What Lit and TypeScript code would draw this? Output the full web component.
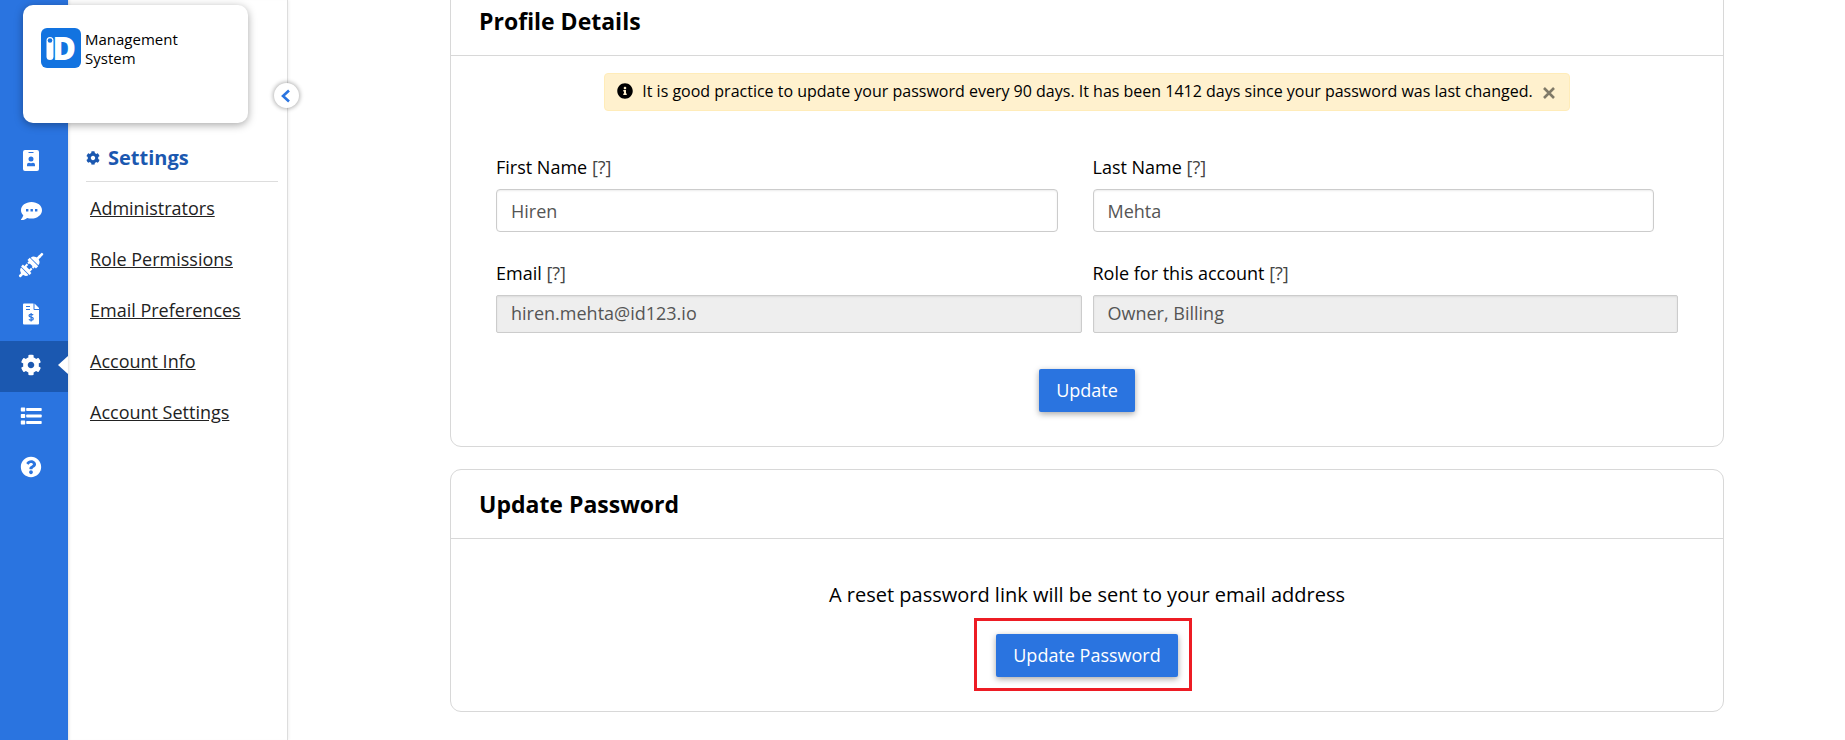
import { LitElement, html, css, svg } from "lit";
import { customElement, state } from "lit/decorators.js";

const COG =
  "M487.4 315.7l-42.6-24.6c4.3-23.2 4.3-47 0-70.2l42.6-24.6c4.9-2.8 7.1-8.6 5.5-14-11.1-35.6-30-67.8-54.7-94.6-3.8-4.1-10-5.1-14.8-2.3L380.8 110c-17.9-15.4-38.5-27.3-60.8-35.1V25.8c0-5.6-3.9-10.5-9.4-11.7-36.7-8.2-74.3-7.8-109.2 0-5.5 1.2-9.4 6.1-9.4 11.7V75c-22.2 7.9-42.8 19.8-60.8 35.1L88.7 85.5c-4.9-2.8-11-1.9-14.8 2.3-24.7 26.7-43.6 58.9-54.7 94.6-1.7 5.4.6 11.2 5.5 14L67.3 221c-4.3 23.2-4.3 47 0 70.2l-42.6 24.6c-4.9 2.8-7.1 8.6-5.5 14 11.1 35.6 30 67.8 54.7 94.6 3.8 4.1 10 5.1 14.8 2.3l42.6-24.6c17.9 15.4 38.5 27.3 60.8 35.1v49.2c0 5.6 3.9 10.5 9.4 11.7 36.7 8.2 74.3 7.8 109.2 0 5.5-1.2 9.4-6.1 9.4-11.7v-49.2c22.2-7.9 42.8-19.8 60.8-35.1l42.6 24.6c4.9 2.8 11 1.9 14.8-2.3 24.7-26.7 43.6-58.9 54.7-94.6 1.5-5.5-.7-11.3-5.6-14.1zM256 336c-44.1 0-80-35.9-80-80s35.9-80 80-80 80 35.9 80 80-35.9 80-80 80z";
const HELP =
  "M504 256c0 136.997-111.043 248-248 248S8 392.997 8 256C8 119.083 119.043 8 256 8s248 111.083 248 248zM262.655 90c-54.497 0-89.255 22.957-116.549 63.758-3.536 5.286-2.353 12.415 2.715 16.258l34.699 26.31c5.205 3.947 12.621 3.008 16.665-2.122 17.864-22.658 30.113-35.797 57.303-35.797 20.429 0 45.698 13.148 45.698 32.958 0 14.976-12.363 22.667-32.534 33.976C247.128 238.528 216 254.941 216 296v4c0 6.627 5.373 12 12 12h56c6.627 0 12-5.373 12-12v-1.333c0-28.462 83.186-29.647 83.186-106.667 0-58.002-60.165-102-116.531-102zM256 338c-25.365 0-46 20.635-46 46 0 25.364 20.635 46 46 46s46-20.636 46-46c0-25.365-20.635-46-46-46z";
const INFO =
  "M256 8C119.043 8 8 119.083 8 256c0 136.997 111.043 248 248 248s248-111.003 248-248C504 119.083 392.957 8 256 8zm0 110c23.196 0 42 18.804 42 42s-18.804 42-42 42-42-18.804-42-42 18.804-42 42-42zm56 254c0 6.627-5.373 12-12 12h-88c-6.627 0-12-5.373-12-12v-24c0-6.627 5.373-12 12-12h12v-64h-12c-6.627 0-12-5.373-12-12v-24c0-6.627 5.373-12 12-12h64c6.627 0 12 5.373 12 12v100h12c6.627 0 12 5.373 12 12v24z";

/* Rail icons, drawn in a 24 x 24 box unless scaled from a 512 grid. */
const ICONS: Record<string, unknown> = {
  badge: svg`<path fill-rule="evenodd" d="M6 1h12a2 2 0 0 1 2 2v17a2 2 0 0 1-2 2H6a2 2 0 0 1-2-2V3a2 2 0 0 1 2-2zM9.500 3v1h5V3zM12 7.500a2.500 2.500 0 1 0 0 5 2.500 2.500 0 0 0 0-5zM10 13.800a2 2 0 0 0-2 2V17.200h8v-1.400a2 2 0 0 0-2-2c-1.300.6-2.700.6-4 0z"/>`,
  chat: svg`<path fill-rule="evenodd" d="M12.500 2C6.700 2 2 5.600 2 10.200c0 2 .9 3.700 2.300 5.100C3.800 17.600 2 19.300 2 19.500c-.2.300 0 .6.300.6 2.600 0 4.700-1.200 5.800-2.200 1.400.4 2.900.6 4.400.6C18.300 18.500 23 14.800 23 10.200S18.300 2 12.500 2zM7 9v2.400h2.400V9zm4.500 0v2.400h2.400V9zM16 9v2.400h2.400V9z"/>`,
  plug: svg`<g transform="translate(0 2) rotate(-45 12 12)">
      <rect x="-4.500" y="10.800" width="5" height="2.600" rx="1"/>
      <path d="M3.200 6.800v10.400C.8 17.200-.8 14.800-.8 12s1.600-5.200 4-5.200z"/>
      <path d="M4 6h2.600v2h3.400v2H7.600v4H10v2H6.600v2H4z"/>
      <path d="M13 6h3.200v12H13v-1.800h-2V14h1.200v-4H11V7.800h2z"/>
      <path d="M17 6.600c2.800 0 4.500 2.400 4.500 5.400s-1.700 5.400-4.500 5.400z"/>
      <rect x="23.300" y="10.800" width="5.200" height="2.600" rx="1"/>
      <rect x="21" y="10.800" width="4" height="2.600"/>
    </g>`,
  invoice: svg`<path fill-rule="evenodd" d="M5 1.500h9.500v5.500a1 1 0 0 0 1 1H20v13.500a1 1 0 0 1-1 1H5a1 1 0 0 1-1-1v-19a1 1 0 0 1 1-1zM7 4v1h4V4zm0 3v1h4V7z"/>
    <path d="M15.500 1.500 20 6v1h-4.500z"/>
    <path d="M14.200 13c-1-1-4.200-1-4.200.7 0 2 4.300 1 4.300 3 0 1.800-3.300 1.800-4.400.6M12.100 11v8.500" fill="none" stroke="#2a74e0" stroke-width="1.200"/>`,
  cog: svg`<path transform="translate(1.500 1.500) scale(.041)" d=${COG}/>`,
  list: svg`<path d="M2.500 3.500h3a.7.7 0 0 1 .7.700v2.600a.7.7 0 0 1-.7.700h-3a.7.7 0 0 1-.7-.7V4.200a.7.7 0 0 1 .7-.7zM2.500 10h3a.7.7 0 0 1 .7.700v2.600a.7.7 0 0 1-.7.700h-3a.7.7 0 0 1-.7-.7v-2.600a.7.7 0 0 1 .7-.7zM2.500 16.500h3a.7.7 0 0 1 .7.700v2.600a.7.7 0 0 1-.7.700h-3a.7.7 0 0 1-.7-.7v-2.600a.7.7 0 0 1 .7-.7z"/>
    <rect x="7.200" y="4" width="15.500" height="3" rx=".7"/><rect x="7.200" y="10.500" width="15.500" height="3" rx=".7"/><rect x="7.200" y="17" width="15.500" height="3" rx=".7"/>`,
  help: svg`<path transform="translate(1.500 1.500) scale(.041)" d=${HELP}/>`,
};

const RAIL = [
  { icon: "badge", label: "ID cards" },
  { icon: "chat", label: "Messages" },
  { icon: "plug", label: "Integrations" },
  { icon: "invoice", label: "Billing" },
  { icon: "cog", label: "Settings" },
  { icon: "list", label: "Logs" },
  { icon: "help", label: "Help" },
];

const LINKS = ["Administrators", "Role Permissions", "Email Preferences", "Account Info", "Account Settings"];

const FIELDS = [
  { id: "first", label: "First Name", value: "Hiren", locked: false },
  { id: "last", label: "Last Name", value: "Mehta", locked: false },
  { id: "email", label: "Email", value: "hiren.mehta@id123.io", locked: true },
  { id: "role", label: "Role for this account", value: "Owner, Billing", locked: true },
];

@customElement("app-root")
export class AppRoot extends LitElement {
  @state() private notice = true;

  static styles = css`
    :host {
      display: flex;
      position: relative;
      height: 100vh;
      overflow: hidden;
      background: #fff;
      color: #000;
      font-family: "Open Sans", "Noto Sans", sans-serif;
      font-size: 18px;
      line-height: 24px;
    }
    * {
      box-sizing: border-box;
    }
    h1,
    h2,
    p {
      margin: 0;
    }
    button,
    input {
      font: inherit;
    }
    .rail {
      flex: none;
      width: 68px;
      padding-top: 137px;
      background: #2a74e0;
    }
    .rail-item {
      display: flex;
      align-items: center;
      position: relative;
      height: 51px;
      padding: 0 0 3px 19px;
      color: #fff;
    }
    .rail-item svg {
      width: 24px;
      height: 24px;
      fill: currentColor;
      overflow: visible;
    }
    .rail-item.active {
      background: #1b58b0;
    }
    .rail-item.active::after {
      content: "";
      position: absolute;
      right: 0;
      top: 15px;
      border: solid transparent;
      border-width: 9px 10px 9px 0;
      border-right-color: #fff;
    }
    .side {
      flex: none;
      position: relative;
      width: 220px;
      padding: 143px 9px 0 18px;
      border-right: 1px solid #ddd;
      box-shadow: inset 3px 0 3px -2px rgba(0, 0, 0, 0.12), 1px 0 3px rgba(0, 0, 0, 0.06);
    }
    .side-title {
      display: flex;
      align-items: center;
      gap: 8px;
      height: 39px;
      padding-bottom: 9px;
      border-bottom: 1px solid #ddd;
      color: #1b58b0;
      font-size: 20px;
      font-weight: 700;
    }
    .side-title svg {
      width: 14px;
      height: 14px;
      fill: currentColor;
    }
    .links {
      display: flex;
      flex-direction: column;
      align-items: flex-start;
      gap: 27px;
      padding: 14px 0 0 4px;
    }
    .links a {
      color: #222;
      text-decoration: underline;
    }
    .collapse {
      display: grid;
      place-items: center;
      position: absolute;
      right: -12px;
      top: 83px;
      width: 25px;
      height: 25px;
      padding: 0;
      border: 0;
      border-radius: 50%;
      background: #fff;
      box-shadow: 0 0 4px 1px rgba(0, 0, 0, 0.3);
    }
    .brand {
      display: flex;
      align-items: flex-start;
      gap: 4px;
      position: absolute;
      left: 23px;
      top: 5px;
      width: 225px;
      height: 118px;
      padding: 23px 18px;
      border-radius: 10px;
      background: #fff;
      box-shadow: 0 2px 8px rgba(0, 0, 0, 0.35);
      font-size: 15px;
      line-height: 19px;
    }
    .brand svg {
      flex: none;
      width: 40px;
      height: 40px;
      overflow: visible;
    }
    .brand span {
      padding-top: 2px;
    }
    .brand text {
      font: 800 32px "Open Sans", sans-serif;
    }
    .main {
      display: flex;
      flex: 1;
      flex-direction: column;
      gap: 22px;
      min-width: 0;
      margin-top: -14px;
      padding: 0 121px 0 162px;
    }
    .card {
      flex: none;
      border: 1px solid #d8d8d8;
      border-radius: 11px;
    }
    .card-title {
      height: 69px;
      padding: 20px 28px 0;
      border-bottom: 1px solid #d8d8d8;
      font-size: 23px;
      font-weight: 700;
      line-height: 28px;
    }
    .body {
      display: flex;
      flex-direction: column;
      align-items: center;
      padding: 17px 45px 34px;
    }
    .notice {
      display: flex;
      align-items: center;
      height: 38px;
      margin-bottom: 44px;
      padding: 0 4px 2px 12px;
      border: 1px solid #ffecb9;
      border-radius: 4px;
      background: #fff1ce;
      font-size: 16px;
    }
    .notice svg {
      width: 16px;
      height: 16px;
      margin-right: 9px;
    }
    .dismiss {
      display: grid;
      place-items: center;
      width: 32px;
      height: 24px;
      padding: 3px 0 0;
      border: 0;
      background: none;
    }
    .dismiss svg {
      margin: 0;
    }
    .fields {
      display: grid;
      grid-template-columns: 1fr 1fr;
      gap: 29px 11px;
      width: 100%;
    }
    .field {
      display: flex;
      flex-direction: column;
      gap: 10px;
    }
    .hint {
      color: #444;
    }
    .field input {
      width: calc(100% - 24px);
      height: 43px;
      padding: 0 14px;
      border: 1px solid #ccc;
      border-radius: 4px;
      background: #fff;
      box-shadow: inset 0 1px 2px rgba(0, 0, 0, 0.08);
      color: #555;
    }
    .field input:disabled {
      width: 100%;
      height: 38px;
      padding-bottom: 2px;
      border-radius: 2px;
      background: #eee;
    }
    .primary {
      height: 43px;
      padding: 0 17px 2px;
      border: 0;
      border-radius: 2px;
      background: #2a74e0;
      box-shadow: 0 2px 6px rgba(0, 0, 0, 0.35);
      color: #fff;
    }
    .save {
      margin-top: 36px;
    }
    .reset {
      padding-top: 42px;
    }
    .reset p {
      margin-bottom: 25px;
      font-size: 20px;
      line-height: 28px;
    }
    .marked {
      position: relative;
    }
    .marked::after {
      content: "";
      position: absolute;
      inset: -16px -14px -14px -22px;
      border: 3px solid #ed1c24;
      pointer-events: none;
    }
  `;

  render() {
    return html`
      <nav class="rail" aria-label="Sections">
        ${RAIL.map(
          (r) => html`<a class="rail-item ${r.icon === "cog" ? "active" : ""}" href="#" aria-label=${r.label}>
            <svg viewBox="0 0 24 24" aria-hidden="true">${ICONS[r.icon]}</svg>
          </a>`
        )}
      </nav>
      <aside class="side">
        <h2 class="side-title">
          <svg viewBox="0 0 512 512" aria-hidden="true"><path d=${COG} /></svg>Settings
        </h2>
        <nav class="links" aria-label="Settings">${LINKS.map((l) => html`<a href="#">${l}</a>`)}</nav>
        <button class="collapse" aria-label="Collapse menu">
          <svg width="25" height="25" viewBox="0 0 25 25" fill="none" stroke="#2a74e0" stroke-width="2.600">
            <path d="M15 7.500l-6 5.500 6 5.500" />
          </svg>
        </button>
      </aside>
      <div class="brand">
        <svg viewBox="0 0 40 40" aria-hidden="true">
          <rect width="40" height="40" rx="6" fill="#1273e0" />
          <rect x="5.500" y="9" width="7" height="23" rx="3.500" fill="#fff" />
          <circle cx="9" cy="12.500" r="2.300" fill="#1273e0" />
          <text x="11.500" y="32" fill="#fff">D</text>
        </svg>
        <span>Management<br />System</span>
      </div>
      <main class="main">
        <section class="card">
          <h1 class="card-title">Profile Details</h1>
          <form class="body" @submit=${(e: Event) => e.preventDefault()}>
            ${this.notice
              ? html`<div class="notice" role="status">
                  <svg viewBox="0 0 512 512" aria-hidden="true"><path d=${INFO} /></svg>
                  <span>It is good practice to update your password every 90 days. It has been 1412 days since your password was last changed.</span>
                  <button class="dismiss" type="button" aria-label="Dismiss" @click=${() => (this.notice = false)}>
                    <svg viewBox="0 0 16 16" stroke="#807a68" stroke-width="2.600"><path d="M3 3l10 10M13 3L3 13" /></svg>
                  </button>
                </div>`
              : ""}
            <div class="fields">
              ${FIELDS.map(
                (f) => html`<div class="field">
                  <label for=${f.id}>${f.label} <span class="hint">[?]</span></label>
                  <input id=${f.id} type="text" .value=${f.value} ?disabled=${f.locked} />
                </div>`
              )}
            </div>
            <button class="primary save">Update</button>
          </form>
        </section>
        <section class="card">
          <h2 class="card-title">Update Password</h2>
          <div class="body reset">
            <p>A reset password link will be sent to your email address</p>
            <div class="marked"><button class="primary">Update Password</button></div>
          </div>
        </section>
      </main>
    `;
  }
}
